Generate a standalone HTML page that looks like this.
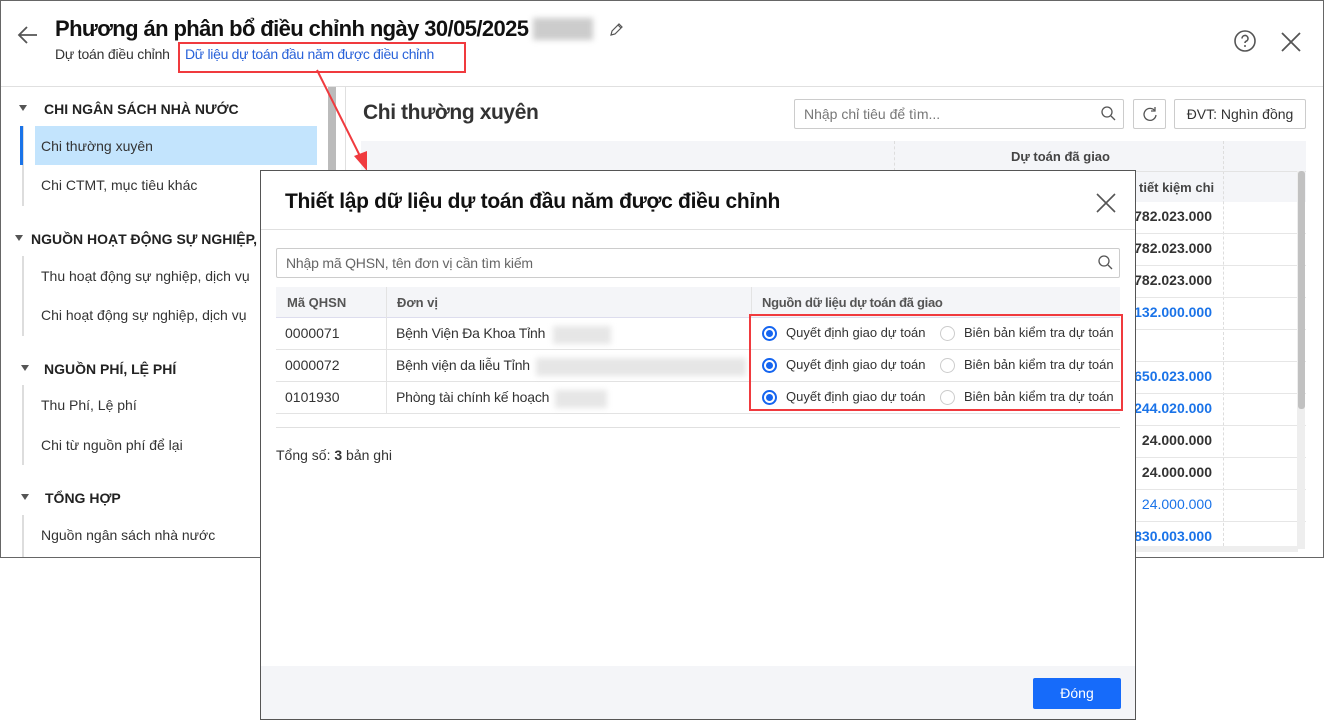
<!DOCTYPE html>
<html><head><meta charset="utf-8"><style>
*{margin:0;padding:0;box-sizing:border-box}
body{width:1324px;height:720px;background:#fff;font-family:"Liberation Sans",sans-serif;position:relative;overflow:hidden;color:#212121}
.a{position:absolute}
.main{left:0;top:0;width:1324px;height:558px;border:1px solid #666;background:#fff;overflow:hidden}
.side .h{position:absolute;font-weight:bold;font-size:14px;color:#222}
.side .i{position:absolute;left:40px;font-size:14px;color:#333}
.tri{position:absolute;width:0;height:0;border-left:4px solid transparent;border-right:4px solid transparent;border-top:6px solid #555}
.vl{position:absolute;left:21px;width:2px;background:#ddd}
.num{position:absolute;right:111px;font-size:14px;font-weight:bold;color:#333;text-align:right}
.blue{color:#1a73e8}
.modal{left:260px;top:170px;width:876px;height:550px;border:1px solid #555;background:#fff}
.rb{position:absolute;width:15px;height:15px;border-radius:50%;border:1px solid #ccc;background:#fff}
.rb.on{border:2px solid #1565f0}
.rb.on::after{content:"";position:absolute;left:2px;top:2px;width:7px;height:7px;border-radius:50%;background:#1565f0}
.cell{position:absolute;font-size:14px;color:#333}
.blur{position:absolute;height:18px;background:#e6e6e6;filter:blur(3px)}
</style></head><body>
<div class="a main">
 <svg class="a" style="left:16px;top:24px" width="22" height="20" viewBox="0 0 22 20"><path d="M20 10H3M10 2L2 10l8 8" fill="none" stroke="#555" stroke-width="1.8"/></svg>
 <div class="a" style="left:54px;top:15px;font-size:22px;font-weight:bold;color:#111;letter-spacing:-0.6px">Phương án phân bổ điều chỉnh ngày 30/05/2025</div>
 <div class="blur" style="left:532px;top:17px;width:60px;height:22px;background:#ccc"></div>
 <svg class="a" style="left:607px;top:21px" width="16" height="16" viewBox="0 0 16 16"><path d="M3 13l1-4 7-7 3 3-7 7zM10 3l3 3" fill="none" stroke="#555" stroke-width="1.2"/></svg>
 <div class="a" style="left:54px;top:45px;font-size:14px;color:#333;letter-spacing:-0.2px">Dự toán điều chỉnh</div>
 <div class="a" style="left:184px;top:45px;font-size:14px;color:#2962d9;letter-spacing:-0.3px">Dữ liệu dự toán đầu năm được điều chỉnh</div>
 <div class="a" style="left:177px;top:41px;width:288px;height:31px;border:2px solid #f03a3e"></div>
 <svg class="a" style="left:1232px;top:28px" width="24" height="24" viewBox="0 0 24 24"><circle cx="12" cy="12" r="10" fill="none" stroke="#555" stroke-width="1.6"/><path d="M9 9.5a3 3 0 1 1 4 2.8c-.8.4-1 .9-1 1.7" fill="none" stroke="#555" stroke-width="1.6"/><circle cx="12" cy="17" r="1" fill="#555"/></svg>
 <svg class="a" style="left:1279px;top:30px" width="22" height="22" viewBox="0 0 22 22"><path d="M2 2l18 18M20 2L2 20" stroke="#555" stroke-width="1.8"/></svg>
 <div class="a" style="left:0;top:85px;width:1324px;height:1px;background:#e0e0e0"></div>
 <div class="side">
  <div class="tri" style="left:18px;top:104px"></div><div class="h" style="left:43px;top:100px">CHI NGÂN SÁCH NHÀ NƯỚC</div>
  <div class="vl" style="top:125px;height:80px;background:#ddd"></div>
  <div class="a" style="left:19px;top:125px;width:3px;height:39px;background:#1a73e8"></div>
  <div class="a" style="left:34px;top:125px;width:282px;height:39px;background:#c3e4fd"></div>
  <div class="i" style="top:137px">Chi thường xuyên</div>
  <div class="i" style="top:176px">Chi CTMT, mục tiêu khác</div>
  <div class="tri" style="left:14px;top:234px"></div><div class="h" style="left:30px;top:230px">NGUỒN HOẠT ĐỘNG SỰ NGHIỆP,</div>
  <div class="vl" style="top:255px;height:80px"></div>
  <div class="i" style="top:267px">Thu hoạt động sự nghiệp, dịch vụ</div>
  <div class="i" style="top:306px">Chi hoạt động sự nghiệp, dịch vụ</div>
  <div class="tri" style="left:20px;top:364px"></div><div class="h" style="left:43px;top:360px">NGUỒN PHÍ, LỆ PHÍ</div>
  <div class="vl" style="top:384px;height:80px"></div>
  <div class="i" style="top:396px">Thu Phí, Lệ phí</div>
  <div class="i" style="top:436px">Chi từ nguồn phí để lại</div>
  <div class="tri" style="left:20px;top:493px"></div><div class="h" style="left:44px;top:489px">TỔNG HỢP</div>
  <div class="vl" style="top:514px;height:44px"></div>
  <div class="i" style="top:526px">Nguồn ngân sách nhà nước</div>
 </div>
 <div class="a" style="left:327px;top:86px;width:8px;height:472px;background:#e6e6e6"></div>
 <div class="a" style="left:327px;top:86px;width:8px;height:120px;background:#bbb"></div>
 <div class="a" style="left:344px;top:86px;width:1px;height:472px;background:#e0e0e0"></div>
 <div class="a" style="left:362px;top:100px;font-size:21px;font-weight:bold;color:#333;letter-spacing:-0.4px">Chi thường xuyên</div>
 <div class="a" style="left:793px;top:98px;width:330px;height:30px;border:1px solid #ccc;border-radius:2px"></div>
 <div class="a" style="left:803px;top:105px;font-size:14px;color:#777">Nhập chỉ tiêu để tìm...</div>
 <svg class="a" style="left:1100px;top:105px" width="15" height="15" viewBox="0 0 15 15"><circle cx="6" cy="6" r="5" fill="none" stroke="#555" stroke-width="1.3"/><path d="M10 10l4 4" stroke="#555" stroke-width="1.3"/></svg>
 <div class="a" style="left:1132px;top:98px;width:33px;height:30px;border:1px solid #ccc;border-radius:2px"></div>
 <svg class="a" style="left:1141px;top:105px" width="16" height="16" viewBox="0 0 16 16"><path d="M13 5A6 6 0 1 0 14 9" fill="none" stroke="#555" stroke-width="1.3"/><path d="M13 1v4h-4" fill="none" stroke="#555" stroke-width="1.3"/></svg>
 <div class="a" style="left:1173px;top:98px;width:132px;height:30px;border:1px solid #ccc;border-radius:2px;font-size:14px;color:#333;text-align:center;line-height:28px">ĐVT: Nghìn đồng</div>
 <div class="a" style="left:360px;top:140px;width:945px;height:61px;background:#f4f5f8"></div>
 <div class="a" style="left:893px;top:140px;width:1px;height:30px;border-left:1px dashed #ddd"></div>
 <div class="a" style="left:1222px;top:140px;width:1px;height:410px;border-left:1px dashed #ddd"></div>
 <div class="a" style="left:893px;top:170px;width:412px;height:1px;background:#e3e3e3"></div>
 <div class="a" style="left:1010px;top:148px;font-size:13px;font-weight:bold;color:#444">Dự toán đã giao</div>
 <div class="a" style="left:1138px;top:179px;font-size:13px;font-weight:bold;color:#444">tiết kiệm chi</div>
 <div class="num" style="top:207px">782.023.000</div>
 <div class="num" style="top:239px">782.023.000</div>
 <div class="num" style="top:271px">782.023.000</div>
 <div class="num blue" style="top:303px">132.000.000</div>
 <div class="num blue" style="top:367px">650.023.000</div>
 <div class="num blue" style="top:399px">244.020.000</div>
 <div class="num" style="top:431px">24.000.000</div>
 <div class="num" style="top:463px">24.000.000</div>
 <div class="num blue" style="top:495px;font-weight:normal">24.000.000</div>
 <div class="num blue" style="top:527px">830.003.000</div>
 <div class="a" style="left:1135px;top:232px;width:170px;height:1px;background:#e6e6e6;box-shadow:0 32px #e6e6e6,0 64px #e6e6e6,0 96px #e6e6e6,0 128px #e6e6e6,0 160px #e6e6e6,0 192px #e6e6e6,0 224px #e6e6e6,0 256px #e6e6e6,0 288px #e6e6e6"></div>
 <div class="a" style="left:1296px;top:170px;width:8px;height:378px;background:#eee"></div>
 <div class="a" style="left:1297px;top:170px;width:7px;height:238px;background:#c1c1c1;border-radius:3px"></div>
 <div class="a" style="left:1135px;top:545px;width:162px;height:6px;background:#eee"></div>
</div>
<svg class="a" style="left:310px;top:68px" width="70" height="110" viewBox="0 0 70 110"><path d="M7 2L52 92" stroke="#f03a3e" stroke-width="2"/><path d="M44 88l13 15 0-20z" fill="#f03a3e"/></svg>
<div class="a modal">
 <div class="a" style="left:24px;top:19px;font-size:21px;font-weight:bold;color:#111;letter-spacing:-0.3px">Thiết lập dữ liệu dự toán đầu năm được điều chỉnh</div>
 <svg class="a" style="left:835px;top:22px" width="20" height="20" viewBox="0 0 20 20"><path d="M1 1l18 18M19 1L1 19" stroke="#555" stroke-width="1.6"/></svg>
 <div class="a" style="left:0;top:58px;width:874px;height:1px;background:#e0e0e0"></div>
 <div class="a" style="left:15px;top:77px;width:844px;height:30px;border:1px solid #ccc;border-radius:2px"></div>
 <div class="a" style="left:25px;top:84px;font-size:14px;color:#666;letter-spacing:-0.2px">Nhập mã QHSN, tên đơn vị cần tìm kiếm</div>
 <svg class="a" style="left:837px;top:84px" width="15" height="15" viewBox="0 0 15 15"><circle cx="6" cy="6" r="5" fill="none" stroke="#555" stroke-width="1.3"/><path d="M10 10l4 4" stroke="#555" stroke-width="1.3"/></svg>
 <div class="a" style="left:15px;top:116px;width:844px;height:31px;background:#f4f5f8;border-bottom:1px solid #dde"></div>
 <div class="a" style="left:125px;top:116px;width:1px;height:126px;background:#e3e3e3"></div>
 <div class="a" style="left:490px;top:116px;width:1px;height:31px;background:#e3e3e3"></div>
 <div class="cell" style="left:26px;top:124px;font-size:13px;font-weight:bold;color:#555">Mã QHSN</div>
 <div class="cell" style="left:136px;top:124px;font-size:13px;font-weight:bold;color:#555">Đơn vị</div>
 <div class="cell" style="left:501px;top:124px;font-size:13px;font-weight:bold;color:#555;letter-spacing:-0.3px">Nguồn dữ liệu dự toán đã giao</div>
 <div class="a" style="left:15px;top:178px;width:844px;height:1px;background:#e3e3e3"></div>
 <div class="a" style="left:15px;top:210px;width:844px;height:1px;background:#e3e3e3"></div>
 <div class="a" style="left:15px;top:242px;width:844px;height:1px;background:#e3e3e3"></div>
 <div class="a" style="left:15px;top:256px;width:844px;height:1px;background:#e0e0e0"></div>
 <div class="cell" style="left:24px;top:154px">0000071</div>
 <div class="cell" style="left:24px;top:186px">0000072</div>
 <div class="cell" style="left:24px;top:218px">0101930</div>
 <div class="cell" style="left:135px;top:154px;letter-spacing:-0.2px">Bệnh Viện Đa Khoa Tỉnh</div>
 <div class="blur" style="left:292px;top:155px;width:58px"></div>
 <div class="cell" style="left:135px;top:186px;letter-spacing:-0.2px">Bệnh viện da liễu Tỉnh</div>
 <div class="blur" style="left:275px;top:187px;width:210px"></div>
 <div class="cell" style="left:135px;top:218px;letter-spacing:-0.2px">Phòng tài chính kế hoạch</div>
 <div class="blur" style="left:294px;top:219px;width:52px"></div>
 <div class="a" style="left:488px;top:143px;width:374px;height:97px;border:2px solid #f03a3e"></div>
 <div class="rb on" style="left:501px;top:155px"></div><div class="cell" style="left:525px;top:154px;font-size:13px">Quyết định giao dự toán</div>
 <div class="rb" style="left:679px;top:155px"></div><div class="cell" style="left:703px;top:154px;font-size:13px">Biên bản kiểm tra dự toán</div>
 <div class="rb on" style="left:501px;top:187px"></div><div class="cell" style="left:525px;top:186px;font-size:13px">Quyết định giao dự toán</div>
 <div class="rb" style="left:679px;top:187px"></div><div class="cell" style="left:703px;top:186px;font-size:13px">Biên bản kiểm tra dự toán</div>
 <div class="rb on" style="left:501px;top:219px"></div><div class="cell" style="left:525px;top:218px;font-size:13px">Quyết định giao dự toán</div>
 <div class="rb" style="left:679px;top:219px"></div><div class="cell" style="left:703px;top:218px;font-size:13px">Biên bản kiểm tra dự toán</div>
 <div class="cell" style="left:15px;top:276px">Tổng số: <b>3</b> bản ghi</div>
 <div class="a" style="left:0;top:495px;width:874px;height:53px;background:#f4f5f8"></div>
 <div class="a" style="left:772px;top:507px;width:88px;height:31px;background:#166bfa;border-radius:2px;color:#fff;font-size:14px;text-align:center;line-height:31px">Đóng</div>
</div>
</body></html>
